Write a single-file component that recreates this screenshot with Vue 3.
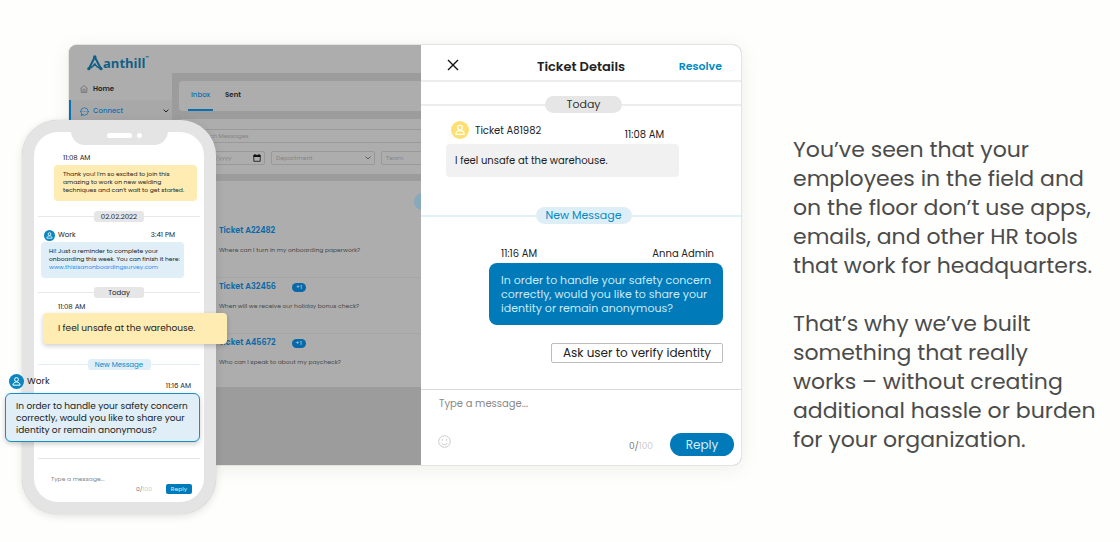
<script setup>
import { ref } from 'vue'

const tickets = [
  { id: 'A22482', unread: '', text: 'Where can I turn in my onboarding paperwork?' },
  { id: 'A32456', unread: '+1', text: 'When will we receive our holiday bonus check?' },
  { id: 'A45672', unread: '+1', text: 'Who can I speak to about my paycheck?' },
]
const draft = ref('')
const phoneDraft = ref('')
</script>

<template>
  <main class="hero">
    <section class="scene" aria-label="Product preview">
      <div class="desktop">
        <nav class="sidebar" aria-label="Main">
          <a class="logo" href="#">
            <svg width="16" height="16" viewBox="0 0 16 16" fill="none" stroke="currentColor" stroke-linejoin="round" stroke-linecap="round">
              <path d="M2 13.500 7.800 2 13.800 13.500" stroke-width="2" />
              <path d="M2 13.500Q5 12.500 7.800 9.500Q10.500 12.500 13.800 13.500" stroke-width="1.500" />
              <circle cx="1.800" cy="13.700" r="1.600" fill="currentColor" stroke="none" />
              <circle cx="14" cy="13.700" r="1.600" fill="currentColor" stroke="none" />
              <circle cx="7.800" cy="2" r="1.700" fill="currentColor" stroke="none" />
              <circle cx="7.800" cy="9.500" r="1.200" fill="currentColor" stroke="none" />
            </svg>
            <span>anthill</span><sup>™</sup>
          </a>
          <a class="nav" href="#">
            <svg width="8" height="8" viewBox="0 0 8 8" fill="none" stroke="#666" stroke-width=".7"><path d="M.6 3.300 4 .6l3.400 2.700M1.200 3v4.400h5.600V3M3 7.200V5a1 1 0 0 1 2 0v2.200" /></svg>
            <span>Home</span>
          </a>
          <a class="nav active" href="#">
            <svg width="9" height="9" viewBox="0 0 9 9" fill="none" stroke="currentColor" stroke-width=".7"><circle cx="4.500" cy="4.500" r="3.700" /><path d="M1.600 7 1.200 8.500 3.200 8M0 4.500h1.500M7.500 4.500H9M2.700 4.500h.7M4.200 4.500h.7M5.700 4.500h.7" /></svg>
            <span>Connect</span>
            <svg class="chev" width="6" height="4" viewBox="0 0 6 4" fill="none" stroke="#222" stroke-width="1"><path d="M.6.6 3 3 5.400.6" /></svg>
          </a>
        </nav>

        <div class="inbox">
          <div class="card tabs">
            <button class="tab on" type="button">Inbox</button>
            <button class="tab" type="button">Sent</button>
          </div>
          <div class="card filters">
            <input class="field" type="text" aria-label="Search messages" placeholder="Search Messages">
            <div class="filter-row">
              <label class="date">
                <input type="text" aria-label="Date" placeholder="mm/dd/yyyy">
                <svg width="8" height="8" viewBox="0 0 8 8"><path d="M.8 1.300h6.400v6H.8z" fill="none" stroke="#111" stroke-width=".8" /><path d="M.5 1h7v2h-7zM1.500 0h1v1h-1zM5.500 0h1v1h-1z" fill="#111" /></svg>
              </label>
              <label class="pick">
                <select aria-label="Department"><option>Department</option></select>
                <svg width="6" height="4" viewBox="0 0 6 4" fill="none" stroke="#555" stroke-width=".9"><path d="M.5.6 3 3 5.500.6" /></svg>
              </label>
              <label class="pick">
                <select aria-label="Team"><option>Team</option></select>
              </label>
            </div>
          </div>
          <div class="card list">
            <div class="more"></div>
            <article v-for="t in tickets" :key="t.id" class="ticket">
              <h3><a href="#">Ticket {{ t.id }}</a><span v-if="t.unread" class="count">{{ t.unread }}</span></h3>
              <p>{{ t.text }}</p>
            </article>
          </div>
        </div>

        <section class="panel" aria-label="Ticket Details">
          <header class="panel-head">
            <button class="close" type="button" aria-label="Close">
              <svg width="12" height="12" viewBox="0 0 12 12" stroke="#111" stroke-width="1.400"><path d="M1 1l10 10M11 1 1 11" /></svg>
            </button>
            <h2>Ticket Details</h2>
            <button class="resolve" type="button">Resolve</button>
          </header>
          <div class="thread">
            <div class="rule"><span>Today</span></div>
            <div class="meta in">
              <svg class="avatar" width="18" height="18" viewBox="0 0 18 18" fill="none" stroke="#fff" stroke-width="1.100"><circle cx="9" cy="9" r="9" fill="#ffdf72" stroke="none" /><circle cx="9" cy="6.600" r="2.300" /><path d="M4.700 13.400c0-5 8.600-5 8.600 0z" stroke-linejoin="round" /></svg>
              <span>Ticket A81982</span>
              <time>11:08 AM</time>
            </div>
            <p class="said in">I feel unsafe at the warehouse.</p>
            <div class="rule fresh"><span>New Message</span></div>
            <div class="meta out"><time>11:16 AM</time><span>Anna Admin</span></div>
            <p class="said out">In order to handle your safety concern<br>correctly, would you like to share your<br>identity or remain anonymous?</p>
            <button class="verify" type="button">Ask user to verify identity</button>
          </div>
          <form class="composer" @submit.prevent>
            <input v-model="draft" type="text" maxlength="100" aria-label="Message" placeholder="Type a message...">
            <div class="tools">
              <button class="smile" type="button" aria-label="Emoji">
                <svg width="13" height="13" viewBox="0 0 13 13" fill="none" stroke="#c4c4c4" stroke-width=".9"><circle cx="6.500" cy="6.500" r="5.800" /><path d="M3.500 7.800c1.300 2.500 4.700 2.500 6 0" /><circle cx="4.500" cy="4.900" r=".4" /><circle cx="8.500" cy="4.900" r=".4" /></svg>
              </button>
              <span class="left">{{ draft.length }}/<i>100</i></span>
              <button class="send" type="submit">Reply</button>
            </div>
          </form>
        </section>
      </div>

      <div class="phone">
        <div class="notch"><i></i><b></b></div>
        <time class="p-time">11:08 AM</time>
        <p class="p-said yellow">Thank you! I'm so excited to join this<br>amazing to work on new welding<br>techniques and can't wait to get started.</p>
        <div class="p-rule"><span>02.02.2022</span></div>
        <div class="p-meta">
          <svg width="11" height="11" viewBox="0 0 18 18" fill="none" stroke="#fff" stroke-width="1.300"><circle cx="9" cy="9" r="9" fill="#0a86c1" stroke="none" /><circle cx="9" cy="6.600" r="2.300" /><path d="M4.700 13.400c0-5 8.600-5 8.600 0z" stroke-linejoin="round" /></svg>
          <span>Work</span><time>3:41 PM</time>
        </div>
        <p class="p-said blue">Hi! Just a reminder to complete your<br>onboarding this week. You can finish it here:<br><a href="#">www.thisisanonboardingsurvey.com</a></p>
        <div class="p-rule today"><span>Today</span></div>
        <time class="p-time second">11:08 AM</time>
        <p class="pop yellow">I feel unsafe at the warehouse.</p>
        <div class="p-rule fresh"><span>New Message</span></div>
        <div class="p-meta large">
          <svg width="15" height="15" viewBox="0 0 18 18" fill="none" stroke="#fff" stroke-width="1.200"><circle cx="9" cy="9" r="9" fill="#0a86c1" stroke="none" /><circle cx="9" cy="6.600" r="2.300" /><path d="M4.700 13.400c0-5 8.600-5 8.600 0z" stroke-linejoin="round" /></svg>
          <span>Work</span><time>11:16 AM</time>
        </div>
        <p class="pop blue">In order to handle your safety concern<br>correctly, would you like to share your<br>identity or remain anonymous?</p>
        <form class="p-composer" @submit.prevent>
          <input v-model="phoneDraft" type="text" maxlength="100" aria-label="Phone message" placeholder="Type a message...">
          <div><span>{{ phoneDraft.length }}/<i>100</i></span><button type="submit">Reply</button></div>
        </form>
      </div>
    </section>

    <section class="copy">
      <p>You’ve seen that your<br>employees in the field and<br>on the floor don’t use apps,<br>emails, and other HR tools<br>that work for headquarters.</p>
      <p>That’s why we’ve built<br>something that really<br>works – without creating<br>additional hassle or burden<br>for your organization.</p>
    </section>
  </main>
</template>

<style>
body { margin: 0; background: #fefefc; }
</style>

<style scoped>
* { box-sizing: border-box; }
.hero {
  display: grid;
  grid-template-columns: minmax(0, 672fr) minmax(0, 327fr);
  gap: 52px;
  padding: 45px 0 24px 69px;
  font-family: Poppins, Inter, "Open Sans", sans-serif;
  color: #222;
}
p, h2, h3 { margin: 0; }
a { color: inherit; text-decoration: none; }
button, input, select { font: inherit; color: inherit; border: 0; background: none; padding: 0; margin: 0; min-width: 0; border-radius: 0; outline: 0; }
button { cursor: pointer; }
select { appearance: none; }
svg { flex: none; display: block; }
i { font-style: normal; }

.scene { position: relative; padding-bottom: 49px; }
.desktop {
  display: grid;
  grid-template-columns: 103px minmax(0, 1fr) 320px;
  min-height: 420px;
  border-radius: 8px;
  overflow: hidden;
  background: #9c9c9c;
  box-shadow: 0 0 0 1px #e4e4e2, 0 3px 18px rgba(80, 80, 60, .1);
}

.sidebar { background: #adadad; font-size: 7px; font-weight: 600; }
.logo { display: flex; align-items: center; height: 33px; padding: 2px 0 0 18px; color: #125f86; }
.logo span { font-family: "Open Sans", sans-serif; font-size: 13px; font-weight: 700; line-height: 20px; }
.logo sup { font-size: 4px; align-self: flex-start; margin-top: 9px; line-height: 4px; }
.nav { display: flex; align-items: center; height: 22px; gap: 5px; padding-left: 11px; }
.nav.active { gap: 4px; padding-left: 9px; border-left: 2px solid #0871b4; color: #0871b4; background: #a8a8a8; font-weight: 500; }
.nav span { flex: 1; }
.chev { margin-right: 3px; }

.inbox { min-width: 0; border-top: 28px solid #adadad; padding: 8px 0 0 7px; font-size: 7px; }
.card { background: #adadad; overflow: hidden; }
.tabs { display: flex; height: 30px; gap: 9px; padding-left: 9px; border-radius: 4px 0 0 4px; font-weight: 600; }
.tab { line-height: 28px; padding: 0 3px; border-bottom: 2px solid transparent; }
.tab.on { color: #0871b4; border-color: #0871b4; font-weight: 500; }
.filters { margin-top: 8px; height: 55px; padding: 10px 0 0 8px; color: #858585; border-radius: 4px 0 0 4px; font-size: 6px; }
.field { display: block; width: 100%; height: 14px; padding-left: 8px; border: 1px solid #9a9a9a; border-right: 0; }
input::placeholder { color: #858585; opacity: 1; }
.filter-row { display: flex; gap: 6px; margin-top: 8px; }
.filter-row label { display: flex; align-items: center; height: 14px; border: 1px solid #999; border-radius: 2px; padding: 0 3px 0 4px; flex: none; }
.date { width: 78px; }
.date input { flex: 1; }
.pick { width: 104px; }
.pick select { flex: 1; line-height: 12px; }
.list { position: relative; margin-top: 7px; height: 206px; padding-top: 41px; border-radius: 4px 0 0 0; }
.more { position: absolute; right: -12px; top: 12px; width: 19px; height: 17px; border-radius: 9px; background: #86a9bc; }
.ticket { height: 56px; padding: 3px 0 0 40px; border-bottom: 1px solid #a6a6a6; }
.ticket:last-child { border: 0; }
.ticket h3 { display: flex; align-items: center; height: 12px; font-size: 8px; font-weight: 600; color: #0868a8; }
.count { margin-left: 16px; width: 14px; line-height: 9px; border-radius: 5px; background: #0868a8; color: #b8c8d4; font-size: 6px; font-weight: 500; text-align: center; }
.ticket p { margin-top: 8px; line-height: 10px; color: #484848; white-space: nowrap; font-size: 6px; }

.panel { display: flex; flex-direction: column; background: #fff; font-size: 10px; }
.panel-head { display: grid; grid-template-columns: 53px 1fr 60px; align-items: center; height: 37px; padding: 8px 19px 0 26px; border-bottom: 2px solid #ededed; }
.close svg { margin-top: -3px; }
.panel-head h2 { font-size: 13px; font-weight: 600; line-height: 20px; text-align: center; }
.resolve { color: #008cc6; font-size: 11px; font-weight: 600; text-align: right; }
.thread { flex: 1; padding: 14px 0 25px; }
.rule { display: flex; align-items: center; height: 17px; font-size: 11px; }
.rule::before, .rule::after { content: ""; flex: 1 1 0; height: 2px; background: #ededed; }
.rule::before { flex-basis: 5px; }
.rule span { width: 77px; line-height: 17px; border-radius: 9px; background: #e6e6e6; text-align: center; color: #333; }
.rule.fresh { margin-top: 30px; color: #008cc6; }
.rule.fresh span { width: 96px; background: #deeef7; color: #008cc6; }
.rule.fresh::before, .rule.fresh::after { background: #e2f0f7; }
.meta { display: flex; align-items: center; }
.meta.in { height: 18px; margin: 8px 77px 0 30px; }
.meta.in span { flex: 1; margin-left: 6px; padding-top: 1px; }
.meta.in time { padding-top: 10px; }
.meta.out { justify-content: space-between; height: 16px; margin: 22px 27px 0 80px; }
.said.in { margin: 5px 62px 0 25px; padding: 0 9px; line-height: 33px; border-radius: 4px; background: #f1f1f1; }
.said.out { margin: 1px 18px 0 68px; padding: 10px 12px; font-size: 11px; line-height: 14px; border-radius: 8px; background: #007ab8; color: #c9ebfb; white-space: nowrap; }
.verify { display: block; margin: 18px 18px 0 auto; width: 172px; height: 20px; border: 1px solid #bdbdbd; border-radius: 2px; font-size: 12px; }
.composer { border-top: 1px solid #dcdcdc; padding: 6px 7px 9px 18px; height: 76px; }
.composer input { display: block; width: 100%; height: 16px; }
.composer input::placeholder { color: #888; }
.tools { display: flex; align-items: center; margin-top: 21px; }
.smile { margin: -6px 0 0 -1px; }
.left { margin-left: auto; margin-right: 17px; padding-top: 3px; color: #777; font-size: 9px; }
.left i, .p-composer i { color: #ccc; }
.send { width: 64px; height: 23px; border-radius: 12px; background: #007ab8; color: #d5f0fc; font-size: 12px; }

.phone {
  position: absolute;
  left: -47px;
  top: 75px;
  width: 194px;
  height: 394px;
  border: 12px solid #e4e4e4;
  border-radius: 36px;
  padding-top: 21px;
  background: #fff;
  box-shadow: 0 0 1px #bbb, 0 2px 8px rgba(0, 0, 0, .12);
  font-size: 7px;
}
.notch { position: absolute; top: -2px; left: 37px; width: 97px; height: 15px; border-radius: 0 0 14px 14px; background: #e4e4e4; }
.notch i, .notch b { position: absolute; top: 3px; height: 5px; border-radius: 3px; background: #fff; }
.notch i { left: 36px; width: 25px; }
.notch b { left: 66px; width: 5px; }
.p-time { display: block; margin-left: 29px; line-height: 10px; }
.p-said { white-space: nowrap; font-size: 6px; line-height: 8px; border-radius: 4px; height: 36px; padding: 5px 9px; }
.yellow { background: #ffecb3; }
.blue { background: #dfeef7; }
.p-said.yellow { margin: 2px 7px 0 20px; }
.p-said.blue { margin: 1px 20px 0 7px; padding-left: 8px; }
.p-said a { color: #1e90f0; }
.p-rule { display: flex; align-items: center; height: 11px; margin: 10px 4px 0; }
.p-rule::before, .p-rule::after { content: ""; flex: 1; height: 1px; background: #e8e8e8; }
.p-rule span { width: 50px; line-height: 11px; border-radius: 3px; background: #e6e6e6; text-align: center; }
.p-rule.today { margin-top: 9px; }
.p-rule.fresh { margin-top: 15px; }
.p-rule.fresh span { width: 63px; background: #dfeef7; color: #008cc6; }
.p-rule.fresh::before, .p-rule.fresh::after { background: #dfeef7; }
.p-meta { display: flex; align-items: center; height: 12px; margin: 7px 29px 0 10px; }
.p-meta span { flex: 1; margin-left: 3px; }
.p-time.second { margin: 4px 0 0 24px; }
.pop { position: relative; white-space: nowrap; font-size: 9px; border-radius: 4px; box-shadow: 0 2px 5px rgba(0, 0, 0, .2); }
.pop.yellow { margin: 1px -23px 0 9px; padding-left: 15px; line-height: 31px; }
.p-meta.large { position: relative; height: 15px; margin: 4px 13px 0 -25px; font-size: 9px; }
.p-meta.large time { font-size: 7px; padding-top: 9px; }
.pop.blue { margin: 4px 4px 0 -29px; height: 49px; padding: 6px 10px; border: 1px solid #178fc4; border-radius: 6px; line-height: 12px; }
.p-composer { margin: 16px 4px 0; border-top: 1px solid #e4e4e4; padding: 15px 8px 0 13px; font-size: 6px; }
.p-composer input { display: block; width: 100%; height: 10px; }
.p-composer div { display: flex; justify-content: flex-end; align-items: center; gap: 14px; color: #777; }
.p-composer button { width: 26px; height: 10px; border-radius: 2px; background: #007ab8; color: #d5f0fc; }

.copy { padding-top: 90px; font-size: 22px; line-height: 29px; color: #4b4b4b; white-space: nowrap; }
.copy p + p { margin-top: 29px; }
</style>
